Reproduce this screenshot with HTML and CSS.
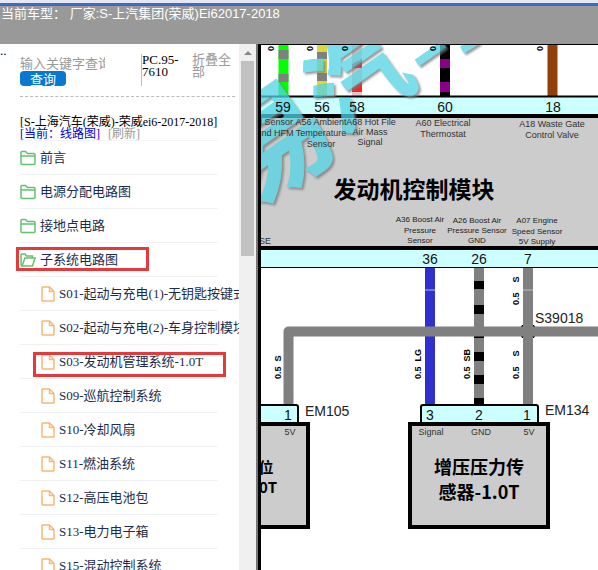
FILE: index.html
```html
<!DOCTYPE html>
<html lang="zh-CN">
<head>
<meta charset="utf-8">
<title>线路图</title>
<link rel="stylesheet" href="styles.css">
</head>
<body>
<svg class="defs" width="0" height="0" aria-hidden="true">
  <symbol id="folder" viewBox="0 0 16 16"><path d="M1 13.5V2.5Q1 1.5 2 1.5H5.5L7.5 3.5H14Q15 3.5 15 4.5V13.5Q15 14.5 14 14.5H2Q1 14.5 1 13.5ZM1 6H15"/></symbol>
  <symbol id="folder-open" viewBox="0 0 16 16"><path d="M2 14L1 12.5V3Q1 2 2 2H5L6.5 4H12.5V6M2 14H12.5L15 6H5Z"/></symbol>
  <symbol id="page" viewBox="0 0 14 16"><path d="M1 1.500Q1 1 1.500 1H8.500L13 5.500V14.500Q13 15 12.500 15H1.500Q1 15 1 14.500ZM8.500 1V5.500H13"/></symbol>
</svg>
<header class="top">当前车型： <span class="model">厂家:S-上汽集团(荣威)Ei62017-2018</span></header>
<main class="main">
  <span class="dots">..</span>
  <aside class="side">
    <form class="search">
      <div class="query">
        <input class="keyword" type="text" placeholder="输入关键字查询" aria-label="输入关键字查询">
        <button class="go" type="button">查询</button>
      </div>
      <div class="code">PC.95-7610</div>
      <a class="fold" href="#">折叠全部</a>
    </form>
    <div class="title">
      <div class="car">[S-上海汽车(荣威)-荣威ei6-2017-2018]</div>
      <a class="current" href="#">[当前：线路图]</a>
      <a class="refresh" href="#">[刷新]</a>
    </div>
    <nav>
      <ul class="tree">
        <li><a href="#"><svg class="folder"><use href="#folder"/></svg>前言</a></li>
        <li><a href="#"><svg class="folder"><use href="#folder"/></svg>电源分配电路图</a></li>
        <li><a href="#"><svg class="folder"><use href="#folder"/></svg>接地点电路</a></li>
        <li class="mark mark-group"><a href="#"><svg class="folder"><use href="#folder-open"/></svg>子系统电路图</a></li>
        <li class="leaf"><a href="#"><svg class="page"><use href="#page"/></svg>S01-起动与充电(1)-无钥匙按键式</a></li>
        <li class="leaf"><a href="#"><svg class="page"><use href="#page"/></svg>S02-起动与充电(2)-车身控制模块</a></li>
        <li class="leaf mark mark-leaf"><a href="#"><svg class="page"><use href="#page"/></svg>S03-发动机管理系统-1.0T</a></li>
        <li class="leaf"><a href="#"><svg class="page"><use href="#page"/></svg>S09-巡航控制系统</a></li>
        <li class="leaf"><a href="#"><svg class="page"><use href="#page"/></svg>S10-冷却风扇</a></li>
        <li class="leaf"><a href="#"><svg class="page"><use href="#page"/></svg>S11-燃油系统</a></li>
        <li class="leaf"><a href="#"><svg class="page"><use href="#page"/></svg>S12-高压电池包</a></li>
        <li class="leaf"><a href="#"><svg class="page"><use href="#page"/></svg>S13-电力电子箱</a></li>
        <li class="leaf"><a href="#"><svg class="page"><use href="#page"/></svg>S15-混动控制系统</a></li>
      </ul>
    </nav>
  </aside>
  <div class="scroll"><span class="arrow"></span><span class="thumb"></span></div>
  <section class="viewer">
    <svg class="diagram" viewBox="261 44 337 526" preserveAspectRatio="xMinYMin slice" role="img" aria-label="发动机控制模块">
      <rect x="261" y="44" width="337" height="526" fill="#fff"/>
      <g class="wires">
        <path d="M283.500 45V97" stroke="#0f0"/>
        <path d="M283.500 50V59M283.500 74V82" stroke="#808080"/>
        <path d="M322 45V97" stroke="#d8d840"/>
        <path d="M322 52V59M322 73V81" stroke="#808080"/>
        <path d="M357 45V97" stroke="#e8c8c8"/>
        <path d="M352 64L362 59V68H352ZM352 88L362 82V92H352Z" fill="#f02828" stroke="none"/>
        <path d="M445 45V97" stroke="#000"/>
        <path d="M445 59V68M445 82V92" stroke="#880088"/>
        <path d="M552.500 45V97" stroke="#904008"/>
      </g>
      <rect x="261" y="114" width="337" height="135" fill="#ccc"/>
      <rect x="261" y="96" width="337" height="18" fill="#cff"/>
      <path d="M261 96.500H598" stroke="#000" stroke-width="2"/>
      <path d="M261 116H598M261 248H598" stroke="#000" stroke-width="4"/>
      <rect x="261" y="250" width="337" height="17" fill="#cff"/>
      <path d="M261 267.500H598" stroke="#000"/>
      <g class="watermark">
        <text transform="translate(274 143) rotate(-35)" x="0" y="41">易</text>
        <text class="second" transform="translate(358 79) rotate(-35)" x="0" y="36">汽</text>
        <path d="M417 63L444 44M462 50L478 40" stroke-width="8"/>
      </g>
      <path d="M261 44.500H598" stroke="#000"/>
      <g class="pin">
        <text x="283" y="112">59</text><text x="322" y="112">56</text><text x="357" y="112">58</text>
        <text x="445" y="112">60</text><text x="553" y="112">18</text>
        <text x="430" y="264">36</text><text x="479" y="264">26</text><text x="528" y="264">7</text>
      </g>
      <g class="note">
        <text x="275" y="125">d Sensor</text><text x="275" y="136">und HFM</text>
        <text x="321" y="125">A56 Ambient</text><text x="321" y="136">Temperature</text><text x="321" y="147">Sensor</text>
        <text x="371" y="125">A68 Hot File</text><text x="370" y="135">Air Mass</text><text x="370" y="145">Signal</text>
        <text x="443" y="126">A60 Electrical</text><text x="443" y="137">Thermostat</text>
        <text x="552" y="127">A18 Waste Gate</text><text x="552" y="138">Control Valve</text>
        <text x="265" y="244">SE</text>
      </g>
      <g class="note note-small">
        <text x="420" y="222">A36 Boost Air</text><text x="420" y="233">Pressure</text><text x="420" y="243">Sensor</text>
        <text x="477" y="223">A26 Boost Air</text><text x="477" y="233">Pressure Sensor</text><text x="477" y="243">GND</text>
        <text x="537" y="223">A07 Engine</text><text x="537" y="234">Speed Sensor</text><text x="537" y="244">5V Supply</text>
      </g>
      <text class="module" x="414" y="198">发动机控制模块</text>
      <g class="wires">
        <path d="M430 268V405" stroke="#3030cc"/>
        <path d="M479 268V405" stroke="#808080"/>
        <path d="M479 281V289M479 305V314M479 335V338M479 352V361M479 375V384M479 398V405" stroke="#000"/>
        <path d="M522 325H534L536 328V334L534 338H522L520 334V328Z" fill="#000" stroke="none"/>
        <path d="M528 268V405M288.500 405V331.500H598" stroke="#808080" stroke-linejoin="round"/>
      </g>
      <path d="M425 290H435M523 290H533" stroke="#bbb"/>
      <g class="gauge">
        <text transform="translate(281 379) rotate(-90)">0.5&#160; S</text>
        <text transform="translate(421 379) rotate(-90)">0.5&#160; LG</text>
        <text transform="translate(470 379) rotate(-90)">0.5&#160; SB</text>
        <text transform="translate(519 379) rotate(-90)">0.5&#160;&#160;&#160; S</text>
        <text transform="translate(519 305) rotate(-90)">0.5&#160;&#160;&#160; S</text>
        <text transform="translate(274 51) rotate(-90)">0</text><text transform="translate(313 51) rotate(-90)">0</text>
        <text transform="translate(348 51) rotate(-90)">0</text><text transform="translate(436 51) rotate(-90)">0</text>
        <text transform="translate(543 51) rotate(-90)">0</text>
      </g>
      <g fill="#cff" stroke="#000" stroke-width="2">
        <rect x="240" y="405" width="58" height="22" rx="2"/>
        <rect x="421" y="405" width="117" height="22" rx="2"/>
      </g>
      <g fill="#ccc" stroke="#000" stroke-width="4">
        <rect x="240" y="424" width="68" height="103"/>
        <rect x="410" y="424" width="138" height="103"/>
      </g>
      <g class="pin">
        <text x="288" y="420">1</text><text x="430" y="420">3</text><text x="479" y="420">2</text><text x="527" y="420">1</text>
      </g>
      <g class="note">
        <text x="290" y="435">5V</text><text x="431" y="435">Signal</text><text x="481" y="435">GND</text><text x="529" y="435">5V</text>
      </g>
      <g class="joint">
        <text x="305" y="416">EM105</text><text x="545" y="415">EM134</text><text x="535" y="323">S39018</text>
      </g>
      <g class="part">
        <text x="479" y="474">增压压力传</text><text x="479" y="499">感器-1.0T</text>
      </g>
      <g class="part part-small">
        <text x="266" y="473">位</text><text x="268" y="493">0T</text>
      </g>
    </svg>
  </section>
</main>
</body>
</html>
```

FILE: styles.css
```css
*, *::after { box-sizing: border-box; }
body {
  margin: 0;
  height: 100vh;
  display: flex;
  flex-direction: column;
  overflow: hidden;
  background: #fff;
  color: #000;
  font: 13px/12px "Liberation Serif", "Noto Sans CJK SC", serif;
}
a { color: inherit; text-decoration: none; }
.defs { position: absolute; }
.top {
  flex: none;
  height: 44px;
  padding: 3px 0 0 1px;
  border-top: 3px solid #e4e8f0;
  background: linear-gradient(#4468c8 3px, #999 3px);
  color: #fff;
  font: 13px/16px "Liberation Sans", "Noto Sans CJK SC", sans-serif;
}
.main { flex: 1; min-height: 0; display: flex; }
.dots { flex: none; width: 16px; padding-top: 1px; }
.side { flex: none; width: 223px; padding-left: 4px; overflow: hidden; }
.search {
  display: flex;
  height: 53px;
  margin-right: 4px;
  padding-top: 10px;
  border-bottom: 1px dashed #bbb;
}
.query { width: 121px; }
.keyword {
  display: block;
  width: 85px;
  height: 17px;
  padding: 0;
  border: 0;
  outline: 0;
  background: none;
  font: 13px/17px "Noto Sans CJK SC", sans-serif;
}
.keyword::placeholder { color: #999; opacity: 1; }
.go {
  display: block;
  width: 46px;
  height: 15px;
  padding: 0;
  border: 0;
  border-radius: 4px;
  background: #0878d0;
  color: #fff;
  font: 13px/15px "Noto Sans CJK SC", sans-serif;
}
.code { width: 38px; height: 32px; border-left: 1px solid #bbb; }
.fold { width: 40px; margin-left: 13px; color: #999; }
.title {
  width: 198px;
  height: 44px;
  padding-top: 19px;
  border-bottom: 1px solid #f2f4f6;
  font-size: 12px;
  white-space: nowrap;
}
.current { color: #0000d8; }
.refresh { margin-left: 5px; color: #999; }
.tree { margin: 0; padding: 0; list-style: none; color: #1c2c4c; }
.tree li { position: relative; width: 198px; height: 34px; border-bottom: 1px solid #f0f2f5; }
.tree a { display: flex; align-items: center; height: 34px; gap: 4px; white-space: nowrap; }
.tree svg { flex: none; fill: none; stroke-width: 1.5px; }
.folder { width: 16px; height: 16px; stroke: #64c070; }
.page { width: 14px; height: 16px; stroke: #f8b878; }
.leaf a { padding-left: 21px; }
.mark::after { content: ""; position: absolute; border: 3px solid #e53a3c; pointer-events: none; }
.mark-group::after { left: -4px; top: 4px; width: 133px; height: 24px; }
.mark-leaf::after { left: 13px; top: 7px; width: 193px; height: 25px; }
.scroll {
  flex: none;
  width: 17px;
  display: flex;
  flex-direction: column;
  align-items: center;
  background: #f0f0f0;
}
.arrow { margin: 7px 0 6px; border: 4px solid transparent; border-top: 0; border-bottom-color: #888; }
.thumb { width: 13px; height: 195px; background: #c1c1c1; }
.viewer { flex: 1; min-width: 0; border-left: 2px solid #777; background: #000; padding-left: 3px; }
.diagram { display: block; width: 100%; height: 100%; font-family: "Liberation Sans", "Noto Sans CJK SC", sans-serif; }
.wires { fill: none; stroke-width: 10px; }
.pin { font-size: 14px; text-anchor: middle; fill: #111; }
.note { font-size: 9px; text-anchor: middle; fill: #333; }
.note-small { font-size: 8px; fill: #222; }
.gauge { font-size: 9px; font-weight: bold; }
.joint { font-size: 14px; fill: #222; }
.module { font: bold 23px "Noto Sans CJK SC", sans-serif; text-anchor: middle; }
.part { font: bold 18px "Noto Sans CJK SC", sans-serif; text-anchor: middle; }
.part-small { font-size: 15px; }
.watermark {
  font: bold 114px "Noto Sans CJK SC", sans-serif;
  text-anchor: middle;
  fill: #50d4e4;
  stroke: #50d4e4;
  opacity: .75;
  filter: drop-shadow(2px 2px 1px #777);
}
.second { font-size: 98px; }
```
